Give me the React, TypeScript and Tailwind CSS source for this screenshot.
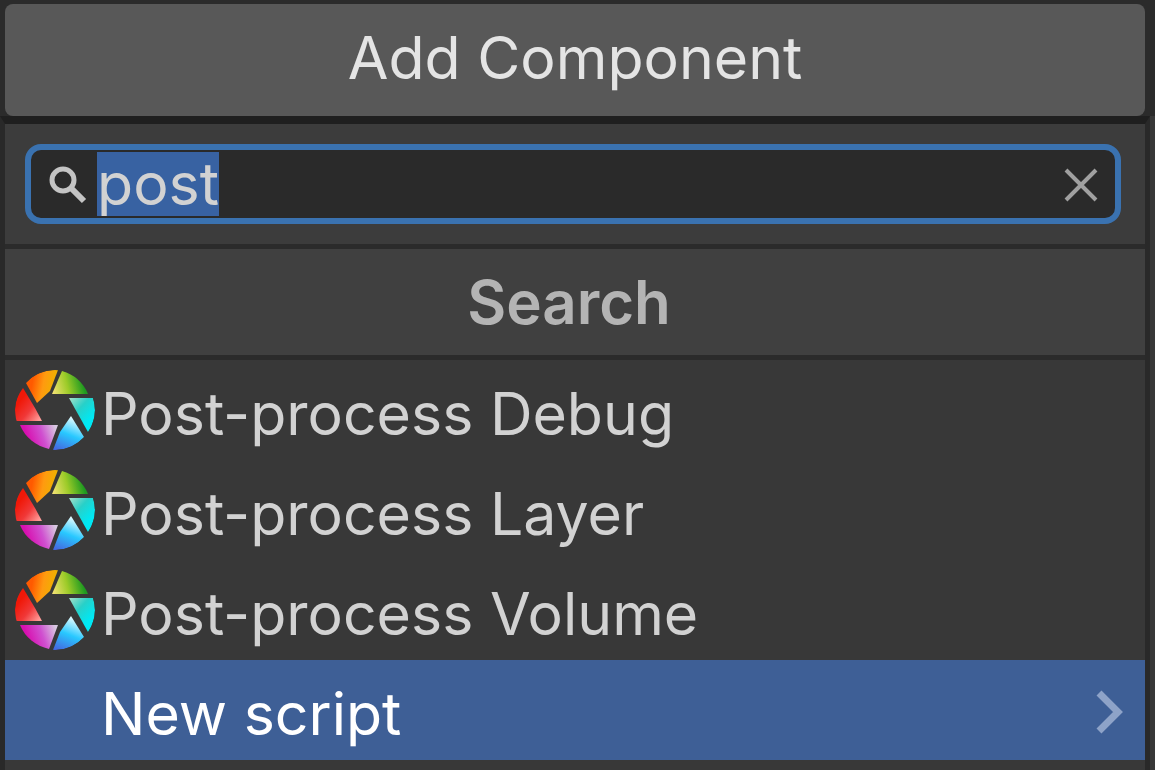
import { useEffect, useRef, useState } from 'react';

function ApertureIcon({ id }: { id: string }) {
  const blades = [
    { name: 'orange', d: 'M11 13A40 40 0 0 1 43 0L35 21L22 33Z', from: [18, 8, '#ff5a00'], mid: '#ff9a10', to: [40, 12, '#f0b000'] },
    { name: 'green', d: 'M47 1A40 40 0 0 1 73 24H37Z', from: [38, 22, '#f0e070'], mid: '#9ccb28', to: [68, 14, '#1f9a20'] },
    { name: 'cyan', d: 'M54 28H78A40 40 0 0 1 73 62Z', from: [54, 28, '#a8e0c8'], mid: '#28d0c8', to: [76, 48, '#00e8f4'] },
    { name: 'blue', d: 'M56 46L69 67A40 40 0 0 1 38 80L45 62Z', from: [57, 46, '#f0ffff'], mid: '#28c8ff', to: [43, 80, '#4468e0'] },
    { name: 'purple', d: 'M5 55H43L34 79A40 40 0 0 1 5 55Z', from: [40, 56, '#d8c8e0'], mid: '#d050d0', to: [12, 66, '#d810b0'] },
    { name: 'red', d: 'M8 18L20 38L27 51H1A40 40 0 0 1 8 18Z', from: [25, 49, '#ff9a98'], mid: '#f03838', to: [4, 32, '#f01808'] },
  ] as const;
  return (
    <svg viewBox="0 0 80 80" className="size-20 shrink-0" aria-hidden="true">
      <defs>
        {blades.map((b) => (
          <linearGradient
            key={b.name}
            id={`${id}-${b.name}`}
            gradientUnits="userSpaceOnUse"
            x1={b.from[0]}
            y1={b.from[1]}
            x2={b.to[0]}
            y2={b.to[1]}
          >
            <stop offset="0" stopColor={b.from[2]} />
            <stop offset="0.5" stopColor={b.mid} />
            <stop offset="1" stopColor={b.to[2]} />
          </linearGradient>
        ))}
        <clipPath id={`${id}-disc`}>
          <circle cx="40" cy="40" r="40" />
        </clipPath>
      </defs>
      <g clipPath={`url(#${id}-disc)`}>
        {blades.map((b) => (
          <path key={b.name} d={b.d} fill={`url(#${id}-${b.name})`} />
        ))}
      </g>
    </svg>
  );
}

const results = [
  { id: 'debug', label: 'Post-process Debug' },
  { id: 'layer', label: 'Post-process Layer' },
  { id: 'volume', label: 'Post-process Volume' },
];

export default function App() {
  const [query, setQuery] = useState('post');
  const input = useRef<HTMLInputElement>(null);

  useEffect(() => {
    input.current?.focus();
    input.current?.select();
  }, []);

  return (
    <main className="min-h-screen overflow-x-hidden bg-[#383838] font-['Inter',sans-serif] text-[59px] leading-[72px] text-[#d2d2d2]">
      <div className="bg-[#2b2b2b] pt-1 pr-[10px] pl-[5px]">
        <button type="button" className="block h-[112px] w-full rounded-lg bg-[#585858] pb-1 text-center text-[#e4e4e4]">
          Add Component
        </button>
      </div>
      <div className="mr-[5px] min-h-[654px] border-x-[5px] border-t-8 border-x-[#292929] border-t-[#1f1f1f]">
        <div className="border-b-[5px] border-[#2b2b2b] bg-[#3c3c3c] pt-5 pr-6 pb-5 pl-5">
          <div className="flex h-20 items-center rounded-2xl border-[6px] border-[#3a72b0] bg-[#2a2a2a] pr-4 pl-[18px]">
            <svg viewBox="0 0 40 40" className="size-10 shrink-0" fill="none" stroke="#c4c4c4" aria-hidden="true">
              <circle cx="14" cy="16" r="11" strokeWidth="5" />
              <path d="M22 24L35 37" strokeWidth="6" />
            </svg>
            <input
              ref={input}
              type="text"
              aria-label="Search components"
              value={query}
              onChange={(e) => setQuery(e.target.value)}
              className="ml-2 h-16 min-w-0 flex-1 bg-transparent leading-[64px] text-[#d2d2d2] outline-none selection:bg-[#3862a2] selection:text-[#d2d2d2]"
            />
            <button type="button" aria-label="Clear search" onClick={() => setQuery('')} className="shrink-0">
              <svg viewBox="0 0 36 36" className="size-9" fill="none" stroke="#a0a0a0" strokeWidth="4">
                <path d="M3 4L33 34M33 4L3 34" />
              </svg>
            </button>
          </div>
        </div>
        <h1 className="flex h-[111px] items-center justify-center border-b-[5px] border-[#2b2b2b] bg-[#404040] pr-3 text-[60px] font-semibold text-[#b4b4b4]">
          Search
        </h1>
        <ul>
          {results.map((r) => (
            <li key={r.id}>
              <button type="button" className="flex h-[100px] w-full items-center gap-1.5 pl-[10px] text-left">
                <ApertureIcon id={r.id} />
                <span className="pt-2">{r.label}</span>
              </button>
            </li>
          ))}
          <li>
            <button type="button" className="flex h-[100px] w-full items-center justify-between bg-[#3e5f96] pr-5 pl-24 text-left text-white">
              <span className="pt-2">New script</span>
              <svg viewBox="0 0 30 48" className="h-12 w-[30px]" fill="none" stroke="#8ea3c8" strokeWidth="7" aria-hidden="true">
                <path d="M4 7L23 26L4 45" />
              </svg>
            </button>
          </li>
        </ul>
      </div>
    </main>
  );
}
